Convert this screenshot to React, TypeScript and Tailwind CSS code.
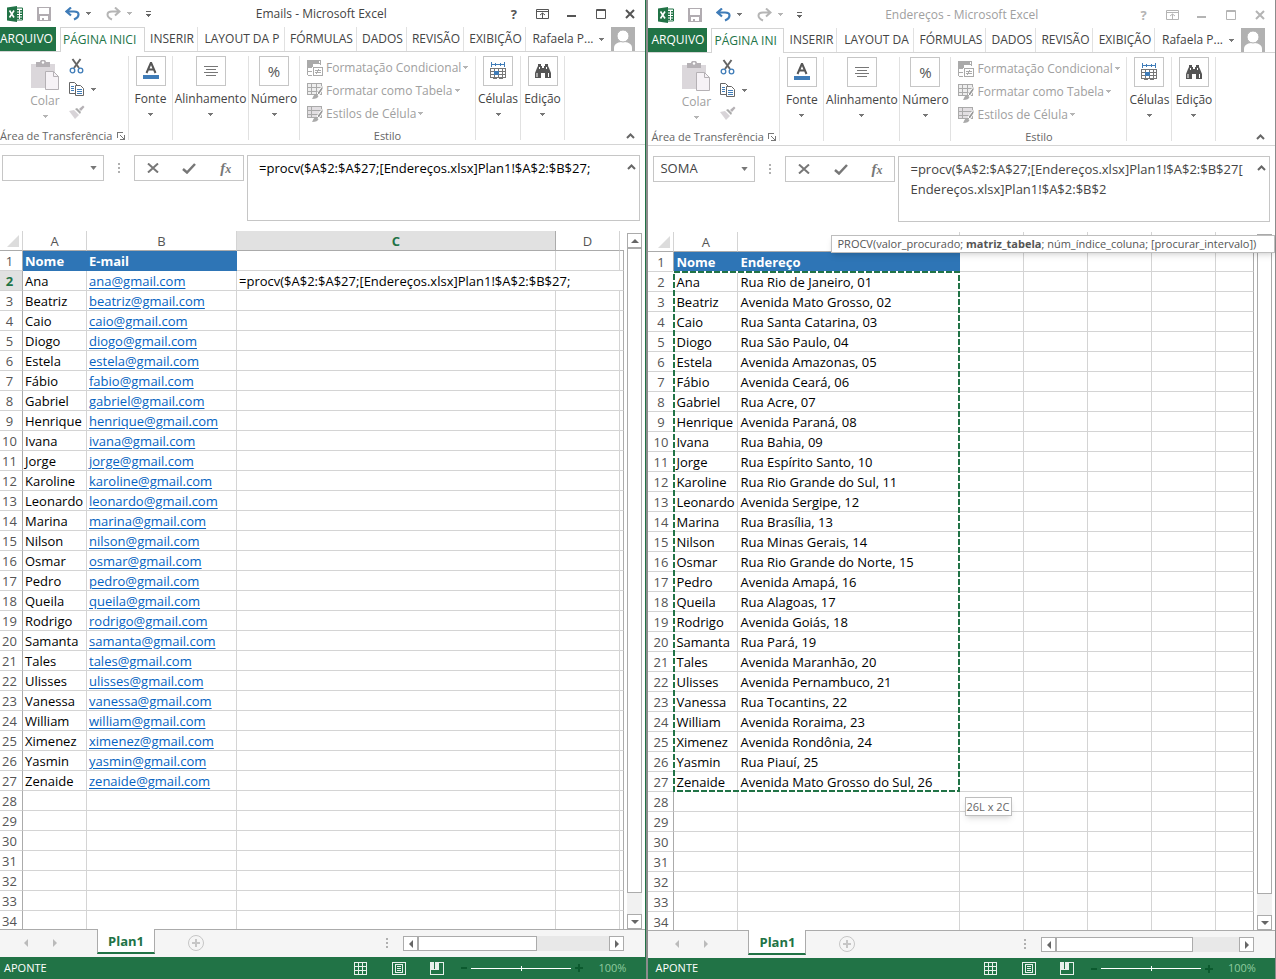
import type { ReactNode } from "react";

const names = [
  "Ana", "Beatriz", "Caio", "Diogo", "Estela", "Fábio", "Gabriel", "Henrique", "Ivana",
  "Jorge", "Karoline", "Leonardo", "Marina", "Nilson", "Osmar", "Pedro", "Queila", "Rodrigo",
  "Samanta", "Tales", "Ulisses", "Vanessa", "William", "Ximenez", "Yasmin", "Zenaide",
];

const emails = names.map((n) => n.toLowerCase().replace("á", "a") + "@gmail.com");

const addresses = [
  "Rua Rio de Janeiro, 01", "Avenida Mato Grosso, 02", "Rua Santa Catarina, 03",
  "Rua São Paulo, 04", "Avenida Amazonas, 05", "Avenida Ceará, 06", "Rua Acre, 07",
  "Avenida Paraná, 08", "Rua Bahia, 09", "Rua Espírito Santo, 10", "Rua Rio Grande do Sul, 11",
  "Avenida Sergipe, 12", "Rua Brasília, 13", "Rua Minas Gerais, 14",
  "Rua Rio Grande do Norte, 15", "Avenida Amapá, 16", "Rua Alagoas, 17", "Avenida Goiás, 18",
  "Rua Pará, 19", "Avenida Maranhão, 20", "Avenida Pernambuco, 21", "Rua Tocantins, 22",
  "Avenida Roraima, 23", "Avenida Rondônia, 24", "Rua Piauí, 25",
  "Avenida Mato Grosso do Sul, 26",
];

const rows = Array.from({ length: 34 }, (_, i) => i + 1);

const FORMULA = "=procv($A$2:$A$27;[Endereços.xlsx]Plan1!$A$2:$B$27;";

function Caret({ className = "text-[#777]" }: { className?: string }) {
  return (
    <svg width="5" height="3" viewBox="0 0 5 3" className={`shrink-0 ${className}`} shapeRendering="crispEdges">
      <path d="M0 0h5v1H4v1H3v1H2V2H1V1H0z" fill="currentColor" />
    </svg>
  );
}

function Chevron() {
  return (
    <svg width="9" height="6" viewBox="0 0 9 6" fill="none" stroke="#666" strokeWidth="2">
      <path d="M1 5l3.5-3.5L8 5" />
    </svg>
  );
}

function Dots() {
  return (
    <svg width="2" height="11" viewBox="0 0 2 11" fill="#b0b0b0" shapeRendering="crispEdges">
      <path d="M0 0h2v2H0zM0 4h2v2H0zM0 8h2v2H0z" />
    </svg>
  );
}

function TitleBar({ title, active }: { title: string; active: boolean }) {
  const tone = active ? "text-[#555]" : "text-[#b4b4b4]";
  return (
    <header className="flex h-[27px] items-center">
      <div className="flex w-[160px] shrink-0 items-center pl-[10px]">
        <svg width="16" height="16" viewBox="0 0 16 16">
          <path d="M9 2h6.5v12H9z" fill="#fff" stroke="#217346" />
          <path d="M10 4h2v1.500h-2zM13 4h2v1.500h-2zM10 6.500h2V8h-2zM13 6.500h2V8h-2zM10 9h2v1.500h-2zM13 9h2v1.500h-2zM10 11.500h2V13h-2zM13 11.500h2V13h-2z" fill="#217346" />
          <path d="M0 1.500L10 0v16L0 14.500z" fill="#217346" />
          <path d="M2.500 4.500l4.500 7M7 4.500l-4.500 7" stroke="#fff" strokeWidth="1.600" />
        </svg>
        <button aria-label="Salvar" className="ml-[14px]">
          <svg width="14" height="14" viewBox="0 0 14 14" fill="#b1acb1">
            <path d="M0 0h14v14H0zM2 1v6h10V1zM3 9v4h2v-2h2v2h4V9z" fillRule="evenodd" />
          </svg>
        </button>
        <button aria-label="Desfazer" className="ml-[14px] flex items-center gap-[6px]">
          <svg width="15" height="14" viewBox="0 0 15 14" fill="none" stroke="#3f7cb8" strokeWidth="2.200">
            <path d="M6 0.500L1.500 4.500 6 8.500M2 4.500h7c6 0 6 5.500 0 8" />
          </svg>
          <Caret />
        </button>
        <button aria-label="Refazer" className="ml-[15px] flex items-center gap-[6px]">
          <svg width="15" height="14" viewBox="0 0 15 14" fill="none" stroke="#b5b5b5" strokeWidth="2">
            <path d="M9 0.500l4.500 4L9 8.500M13 4.500H6c-6 0-6 5.500 0 8" />
          </svg>
          <Caret className="text-[#b5b5b5]" />
        </button>
        <button aria-label="Personalizar" className="ml-[14px]">
          <svg width="5" height="6" viewBox="0 0 5 6" fill="#666" shapeRendering="crispEdges">
            <path d="M0 0h5v1H0zM0 3h5v1H4v1H3v1H2V5H1V4H0z" />
          </svg>
        </button>
      </div>
      <h1 className={`min-w-0 flex-1 truncate text-center text-[12px] ${active ? "text-[#444]" : "text-[#a0a0a0]"}`}>
        {title} - Microsoft Excel
      </h1>
      <div className={`flex w-[160px] shrink-0 justify-end pr-px ${tone}`}>
        <button aria-label="Ajuda" className="w-[29px] text-center text-[13px] font-bold leading-[16px]">?</button>
        <button aria-label="Opções da faixa" className="flex w-[29px] items-center justify-center">
          <svg width="13" height="10" viewBox="0 0 13 10" fill="none" stroke="currentColor">
            <path d="M.5.5h12v9H.5zM1 2.500h11M6.500 9V4M4 6l2.500-2L9 6" />
          </svg>
        </button>
        <button aria-label="Minimizar" className="flex w-[29px] items-center justify-center">
          <svg width="9" height="10" viewBox="0 0 9 10"><path d="M0 6h9v2H0z" fill="currentColor" /></svg>
        </button>
        <button aria-label="Maximizar" className="flex w-[29px] items-center justify-center">
          <svg width="10" height="10" viewBox="0 0 10 10" fill="none" stroke="currentColor">
            <path d="M.5.5h9v9h-9zM0 1.500h10" />
          </svg>
        </button>
        <button aria-label="Fechar" className="flex w-[29px] items-center justify-center">
          <svg width="10" height="10" viewBox="0 0 10 10" stroke="currentColor" strokeWidth="2">
            <path d="M1 1l8 8M9 1L1 9" />
          </svg>
        </button>
      </div>
    </header>
  );
}

function Tabs({ home, homeWidth, layout, layoutWidth }: { home: string; homeWidth: string; layout: string; layoutWidth: string }) {
  const tabs = [
    ["INSERIR", "w-[53px]"],
    [layout, layoutWidth],
    ["FÓRMULAS", "w-[72px]"],
    ["DADOS", "w-[50px]"],
    ["REVISÃO", "w-[57px]"],
    ["EXIBIÇÃO", "w-[62px]"],
  ];
  return (
    <nav className="flex h-[25px] border-b border-[#d4d4d4] text-[12px] text-[#444]">
      <button className="w-[59px] shrink-0 bg-[#217346] text-white">ARQUIVO</button>
      <button className={`-mb-px ml-[4px] shrink-0 overflow-hidden whitespace-nowrap border border-b-0 border-[#d4d4d4] bg-white pl-[2px] text-left text-[#217346] ${homeWidth}`}>
        {home}
      </button>
      {tabs.map(([label, width]) => (
        <button key={label} className={`shrink-0 whitespace-nowrap border-r border-[#e1e1e1] pl-[2px] ${width}`}>
          {label}
        </button>
      ))}
      <button className="ml-auto mr-[10px] flex items-center">
        <span>Rafaela P...</span>
        <Caret className="ml-[6px] mr-[7px] text-[#777]" />
        <svg width="24" height="24" viewBox="0 0 24 24">
          <path d="M0 0h24v24H0z" fill="#b1b1b1" />
          <path d="M3 24v-3c0-5 5-6 9-6s9 1 9 6v3z" fill="#fff" />
          <circle cx="12" cy="9" r="6" fill="#fff" stroke="#b1b1b1" />
        </svg>
      </button>
    </nav>
  );
}

function BigButton({ label, width, children }: { label: string; width: string; children: ReactNode }) {
  return (
    <button className={`flex h-[84px] shrink-0 flex-col items-center border-r border-[#e1e1e1] ${width}`}>
      <span className="flex size-[30px] items-center justify-center border border-[#c6c6c6]">{children}</span>
      <span className="mt-[4px] text-[12px] leading-[18px] text-[#444]">{label}</span>
      <Caret className="mt-[5px] text-[#777]" />
    </button>
  );
}

function StyleIcon({ kind }: { kind: number }) {
  return (
    <svg width="16" height="16" viewBox="0 0 16 16" fill="none" stroke="#aaa" shapeRendering="crispEdges">
      {kind === 0 ? (
        <>
          <path d="M0 0h12v3H0zM0 4h5v3H0z" fill="#aaa" stroke="none" />
          <path d="M.5.5h13v4M.5 3.500h13M5.500 0v7M.5 0v15M.5 7.500H5M.5 11.500H5M.5 15.500H5" />
          <path d="M6.500 7.500h9v8h-9zM8 10.500h6M8 12.500h6M12 9l-2.500 5" fill="#fff" />
        </>
      ) : (
        <>
          <path d="M.5.5h14v11H.5z" fill={kind === 1 ? "#eee" : "#e2dfe2"} />
          <path d="M0 4.500h15M0 8.500h15M4.500 0v12" />
          {kind === 1 && <path d="M9.500 0v12" />}
          <path d="M16 2l-6 8 2 2 4-6z" fill="#999" stroke="#fff" shapeRendering="auto" />
          <path d="M5 16c1-1 1-4 4-5l2.500 2C11 15 9 16 5 16z" fill="#aaa" stroke="none" shapeRendering="auto" />
        </>
      )}
    </svg>
  );
}

function Ribbon() {
  return (
    <div className="flex h-[93px] items-start border-b border-[#d4d4d4] pt-[4px]">
      <div className="flex h-[84px] w-[132px] shrink-0 flex-col border-r border-[#e1e1e1]">
        <div className="flex h-[71px] shrink-0">
          <button className="ml-[30px] flex w-[36px] flex-col items-center pt-[4px] text-[12px] leading-[18px] text-[#a0a0a0]">
            <svg width="29" height="31" viewBox="0 0 29 31" className="shrink-0">
              <path d="M0 4h24v8h-8v16H0z" fill="#dbd7db" />
              <path d="M5 2h4c0-3 6-3 6 0h4v5H5z" fill="#b5b1b5" />
              <circle cx="12" cy="2.500" r="1.200" fill="#fff" />
              <path d="M14.500 11.500h8l5 5v13h-13z" fill="#f6f2f6" stroke="#b5b1b5" />
              <path d="M22.500 11.500v5h5" fill="none" stroke="#b5b1b5" />
            </svg>
            <span className="mt-px">Colar</span>
            <Caret className="mt-[5px] text-[#b5b5b5]" />
          </button>
          <div className="ml-[6px] flex flex-col items-start gap-[8px] pt-[2px]">
            <button aria-label="Recortar">
              <svg width="16" height="16" viewBox="0 0 16 16" fill="none">
                <path d="M3.500 1L10 10M11.500 1L5 10" stroke="#666" strokeWidth="2" />
                <circle cx="3.500" cy="12.500" r="2.300" stroke="#3f7cb8" strokeWidth="1.300" />
                <circle cx="11.500" cy="12.500" r="2.300" stroke="#3f7cb8" strokeWidth="1.300" />
              </svg>
            </button>
            <button aria-label="Copiar" className="flex items-center gap-[7px]">
              <svg width="15" height="15" viewBox="0 0 15 15" fill="#fff" stroke="#666">
                <path d="M.5.5h5l3 3v8h-8z" />
                <path d="M2 4.500h3M2 6.500h3M2 8.500h3" stroke="#3f7cb8" />
                <path d="M6.500 3.500h5l3 3v7h-8z" />
                <path d="M8 7.500h5M8 9.500h5M8 11.500h5" stroke="#3f7cb8" />
              </svg>
              <Caret />
            </button>
            <button aria-label="Pincel de formatação">
              <svg width="16" height="15" viewBox="0 0 16 15">
                <path d="M0 6l5-1 5 5-4 4z" fill="#d8d4d8" />
                <path d="M6 4l2-1 4 4-1 2z" fill="#aaa" />
                <path d="M10 4l4-3.500 1.500 1.500L12 6z" fill="#b5b1b5" />
              </svg>
            </button>
          </div>
        </div>
        <div className="flex items-center pl-[3px] text-[11px] leading-[18px] text-[#666]">
          <span className="whitespace-nowrap">Área de Transferência</span>
          <button aria-label="Abrir área de transferência" className="ml-auto mr-[3px]">
            <svg width="8" height="8" viewBox="0 0 8 8" fill="none" stroke="#777" shapeRendering="crispEdges">
              <path d="M.5 6V.5H6M3 3l4 4M7.500 3v4.500H3" />
            </svg>
          </button>
        </div>
      </div>
      <BigButton label="Fonte" width="w-[44px]">
        <svg width="16" height="18" viewBox="0 0 16 18">
          <path d="M0 13h16v4H0z" fill="#3f7cb8" />
          <path d="M3.500 11L8 0.500 12.500 11M5 7.500h6" stroke="#555" strokeWidth="2" fill="none" />
        </svg>
      </BigButton>
      <BigButton label="Alinhamento" width="w-[76px]">
        <svg width="14" height="13" viewBox="0 0 14 13" fill="#777" shapeRendering="crispEdges">
          <path d="M0 1h14v1H0zM2 4h10v1H2zM0 7h14v1H0zM2 10h10v1H2z" />
        </svg>
      </BigButton>
      <BigButton label="Número" width="w-[51px]">
        <span className="text-[15px] text-[#555]">%</span>
      </BigButton>
      <div className="flex h-[84px] w-[176px] shrink-0 flex-col border-r border-[#e1e1e1]">
        <div className="flex h-[71px] shrink-0 flex-col pl-[7px]">
          {["Formatação Condicional", "Formatar como Tabela", "Estilos de Célula"].map((label, i) => (
            <button key={label} className="flex h-[23px] items-center whitespace-nowrap text-[12px] text-[#a0a0a0]">
              <StyleIcon kind={i} />
              <span className="ml-[3px] mr-[2px]">{label}</span>
              <Caret className="text-[#b5b5b5]" />
            </button>
          ))}
        </div>
        <p className="text-center text-[11px] leading-[18px] text-[#666]">Estilo</p>
      </div>
      <BigButton label="Células" width="w-[45px]">
        <svg width="16" height="18" viewBox="0 0 16 18" fill="none" shapeRendering="crispEdges">
          <path d="M1 2.500h14M1.500 0v5M14.500 0v5M5.500 1v3M10.500 1v3" stroke="#3f7cb8" />
          <path d="M.5 6.500h15v9H.5zM0 9.500h16M0 12.500h16M4.500 6v10M8.500 6v10M12.500 6v10M3 16.500h4M9 16.500h4" stroke="#777" />
          <path d="M4 9h5v4H4z" fill="#3f7cb8" />
        </svg>
      </BigButton>
      <BigButton label="Edição" width="w-[44px]">
        <svg width="16" height="14" viewBox="0 0 16 14" fill="#555">
          <path d="M3 0h3v2h1v2h2V2h1V0h3v2l1 2 2 5v5h-6V9H6v5H0V9l2-5 1-2z" />
          <path d="M1.500 9h1v4h-1zM14 9h-1v4h1zM4 3h1v2H4zM11 3h1v2h-1z" fill="#fff" />
        </svg>
      </BigButton>
      <button aria-label="Recolher faixa" className="ml-auto mr-[10px] self-end pb-[5px]">
        <Chevron />
      </button>
    </div>
  );
}

function FormulaBar({ id, name, value, color }: { id: string; name: string; value: string; color: string }) {
  return (
    <div className="flex h-[86px] items-start pl-[5px] pr-[5px] pt-[10px] text-[13px]">
      <div className="flex h-[26px] w-[102px] shrink-0 items-center border border-[#c6c6c6] pr-[6px]">
        <input id={`${id}-name`} aria-label="Caixa de nome" defaultValue={name} className="w-full min-w-0 pl-[6px] text-[#444] outline-none" />
        <button aria-label="Lista de nomes">
          <svg width="7" height="4" viewBox="0 0 8 5"><path d="M0 0h8L4 5z" fill="#777" /></svg>
        </button>
      </div>
      <span className="flex h-[26px] w-[30px] shrink-0 items-center justify-center"><Dots /></span>
      <div className="flex h-[26px] w-[110px] shrink-0 items-center justify-around border border-[#c6c6c6]">
        <button aria-label="Cancelar">
          <svg width="12" height="10" viewBox="0 0 12 10" stroke="#777" strokeWidth="2"><path d="M1 .5l10 9M11 .5l-10 9" /></svg>
        </button>
        <button aria-label="Inserir">
          <svg width="14" height="11" viewBox="0 0 14 11" fill="none" stroke="#777" strokeWidth="2.500"><path d="M1 6l4 3.500L13 1" /></svg>
        </button>
        <button aria-label="Inserir função" className="font-['Liberation_Serif',serif] text-[15px] font-bold italic leading-[20px] text-[#777]">
          f<span className="text-[12px]">x</span>
        </button>
      </div>
      <div className="ml-[3px] flex h-[66px] min-w-0 flex-1 items-start border border-[#c6c6c6] pr-[3px]">
        <textarea
          aria-label="Barra de fórmulas"
          defaultValue={value}
          className={`h-full min-w-0 flex-1 resize-none overflow-hidden break-all pl-[11px] pt-[2px] leading-[20px] outline-none ${color}`}
        />
        <button aria-label="Recolher barra de fórmulas" className="pt-[8px]"><Chevron /></button>
      </div>
    </div>
  );
}

function ScrollButton({ label, d }: { label: string; d: string }) {
  return (
    <button aria-label={label} className="flex size-[15px] shrink-0 items-center justify-center border border-[#ababab] bg-white">
      <svg width="8" height="8" viewBox="0 0 8 8"><path d={d} fill="#666" /></svg>
    </button>
  );
}

function VerticalScroll() {
  return (
    <div className="flex w-[21px] shrink-0 flex-col px-[3px] pt-[2px]">
      <ScrollButton label="Rolar para cima" d="M0 6l4-4 4 4z" />
      <div className="flex min-h-0 flex-1 flex-col bg-[#f1f1f1]">
        <div className="mb-[21px] flex-1 border border-[#ababab] bg-white" />
      </div>
      <ScrollButton label="Rolar para baixo" d="M0 2h8L4 6z" />
    </div>
  );
}

function ColumnHeaders({ columns, selected }: { columns: string[]; selected?: string }) {
  return (
    <thead>
      <tr className="h-[20px]">
        <th className="border-b border-r border-b-[#ababab] border-r-[#d4d4d4]">
          <svg width="12" height="12" viewBox="0 0 12 12" className="ml-auto mr-[3px]"><path d="M12 0v12H0z" fill="#dcdcdc" /></svg>
        </th>
        {columns.map((c, i) => (
          <th
            key={i}
            className={
              c !== "" && c === selected
                ? "border-b border-r border-[#ababab] bg-[#e1e1e1] font-bold text-[#217346]"
                : "border-b border-r border-b-[#ababab] border-r-[#d4d4d4] font-normal text-[#555]"
            }
          >
            {c}
          </th>
        ))}
        <th className="border-b border-[#ababab]" />
      </tr>
    </thead>
  );
}

const sheet = "w-full table-fixed border-separate border-spacing-0 text-[13px] leading-[18px] text-black";
const cell = "overflow-hidden whitespace-nowrap border-b border-r border-[#d4d4d4] pl-[2px]";
const headCell = "bg-[#2e75b6] pl-[2px] text-left font-bold text-white";
const edge = "border-b border-r border-b-[#d4d4d4] border-r-[#ababab]";

function RowNumber({ n, selected }: { n: number; selected?: boolean }) {
  return (
    <th scope="row" className={`${edge} ${selected ? "bg-[#e1e1e1] font-bold text-[#217346]" : "font-normal text-[#555]"}`}>
      {n}
    </th>
  );
}

function EmailSheet() {
  return (
    <table className={sheet}>
      <colgroup>
        <col className="w-[26px]" />
        <col className="w-[64px]" />
        <col className="w-[150px]" />
        <col className="w-[319px]" />
        <col className="w-[64px]" />
        <col />
      </colgroup>
      <ColumnHeaders columns={["A", "B", "C", "D"]} selected="C" />
      <tbody>
        {rows.map((n) => (
          <tr key={n} className="h-[20px]">
            <RowNumber n={n} selected={n === 2} />
            {n === 1 ? (
              <>
                <th className={headCell}>Nome</th>
                <th className={headCell}>E-mail</th>
              </>
            ) : (
              <>
                <td className={cell}>{names[n - 2]}</td>
                <td className={cell}>
                  {emails[n - 2] && (
                    <a href={`mailto:${emails[n - 2]}`} className="text-[#0563c1] underline underline-offset-2">
                      {emails[n - 2]}
                    </a>
                  )}
                </td>
              </>
            )}
            {n === 2 ? (
              <td colSpan={3} className={`whitespace-nowrap pl-[2px] ${edge}`}>{FORMULA}</td>
            ) : (
              <>
                <td className={cell} />
                <td className={cell} />
                <td className={edge} />
              </>
            )}
          </tr>
        ))}
      </tbody>
    </table>
  );
}

function AddressSheet() {
  return (
    <table className={sheet}>
      <colgroup>
        <col className="w-[26px]" />
        <col className="w-[64px]" />
        <col className="w-[222px]" />
        <col className="w-[64px]" />
        <col className="w-[64px]" />
        <col className="w-[64px]" />
        <col className="w-[64px]" />
        <col />
      </colgroup>
      <ColumnHeaders columns={["A", "", "", "", "", ""]} />
      <tbody>
        {rows.map((n) => (
          <tr key={n} className="h-[20px]">
            <RowNumber n={n} />
            {n === 1 ? (
              <>
                <th className={headCell}>Nome</th>
                <th className={headCell}>Endereço</th>
              </>
            ) : (
              <>
                <td className={cell}>{names[n - 2]}</td>
                <td className={cell}>{addresses[n - 2]}</td>
              </>
            )}
            <td className={cell} />
            <td className={cell} />
            <td className={cell} />
            <td className={cell} />
            <td className={edge} />
          </tr>
        ))}
      </tbody>
    </table>
  );
}

function SheetBar({ scroll, thumb }: { scroll: string; thumb: string }) {
  return (
    <div className="flex h-[28px] shrink-0 items-start border-t border-[#ababab] bg-[#f5f5f5]">
      <div className="flex h-[26px] w-[100px] shrink-0 items-center gap-[25px] pl-[27px]">
        <button aria-label="Planilha anterior"><svg width="4" height="8" viewBox="0 0 4 8"><path d="M4 0v8L0 4z" fill="#bbb" /></svg></button>
        <button aria-label="Próxima planilha"><svg width="4" height="8" viewBox="0 0 4 8"><path d="M0 0v8l4-4z" fill="#bbb" /></svg></button>
      </div>
      <button className="-mt-px h-[25px] w-[58px] shrink-0 border-x border-b-2 border-x-[#ababab] border-b-[#217346] bg-white pt-px text-[13px] font-bold leading-[22px] text-[#217346]">
        Plan1
      </button>
      <button aria-label="Nova planilha" className="ml-[33px] mt-[5px]">
        <svg width="16" height="16" viewBox="0 0 16 16" fill="none" stroke="#c6c6c6">
          <circle cx="8" cy="8" r="7.500" />
          <path d="M8 4v8M4 8h8" strokeWidth="2" />
        </svg>
      </button>
      <div className="ml-auto mr-[15px] mt-[8px]"><Dots /></div>
      <div className={`mr-[21px] mt-[6px] flex shrink-0 bg-[#e8e8e8] ${scroll}`}>
        <ScrollButton label="Rolar para a esquerda" d="M6 0v8L2 4z" />
        <div className={`h-[15px] border border-[#ababab] bg-white ${thumb}`} />
        <span className="flex-1" />
        <ScrollButton label="Rolar para a direita" d="M2 0v8l4-4z" />
      </div>
    </div>
  );
}

function StatusBar({ height }: { height: string }) {
  return (
    <footer className={`flex shrink-0 items-center bg-[#217346] pl-[7px] pr-[19px] text-[11px] text-white ${height}`}>
      <span>APONTE</span>
      <button aria-label="Normal" className="ml-auto">
        <svg width="13" height="13" viewBox="0 0 13 13" fill="none" stroke="#e9f1ec" shapeRendering="crispEdges">
          <path d="M.5.5h12v12H.5zM4.500 0v13M8.500 0v13M0 4.500h13M0 8.500h13" />
        </svg>
      </button>
      <button aria-label="Layout da página" className="ml-[25px]">
        <svg width="14" height="13" viewBox="0 0 14 13" fill="none" stroke="#e9f1ec" shapeRendering="crispEdges">
          <path d="M.5.5h13v12H.5zM3.500 2.500h7v8h-7zM5 4.500h4M5 6.500h4M5 8.500h4" />
        </svg>
      </button>
      <button aria-label="Quebra de página" className="ml-[24px]">
        <svg width="14" height="13" viewBox="0 0 14 13" shapeRendering="crispEdges">
          <path d="M0 0h4v7H0zM5 0h4v7H5z" fill="#e9f1ec" />
          <path d="M.5 0v12.500h13V.5H9M0 7.500h9" fill="none" stroke="#e9f1ec" />
        </svg>
      </button>
      <button aria-label="Reduzir" className="ml-[17px]">
        <svg width="6" height="8" viewBox="0 0 6 8"><path d="M0 3h6v2H0z" fill="#0b5a2e" /></svg>
      </button>
      <input
        type="range"
        aria-label="Zoom"
        defaultValue={50}
        className="ml-[4px] h-[5px] w-[100px] appearance-none bg-[linear-gradient(#fff,#fff)] bg-[length:100%_1px] bg-center bg-no-repeat [&::-webkit-slider-thumb]:h-[5px] [&::-webkit-slider-thumb]:w-px [&::-webkit-slider-thumb]:appearance-none [&::-webkit-slider-thumb]:bg-white"
      />
      <button aria-label="Ampliar" className="ml-[4px]">
        <svg width="8" height="8" viewBox="0 0 8 8"><path d="M0 3h3V0h2v3h3v2H5v3H3V5H0z" fill="#0b5a2e" /></svg>
      </button>
      <span className="ml-[15px] w-[28px] text-[#8fcb9f]">100%</span>
    </footer>
  );
}

export default function App() {
  return (
    <div className="flex h-screen overflow-hidden bg-white font-['Open_Sans','Noto_Sans',sans-serif]">
      <section className="-ml-[3px] flex min-w-0 flex-[651_1_0%] border-r-2 border-[#8c8c8c]">
        <div className="flex min-w-0 flex-1 flex-col border-r border-[#217346]">
          <TitleBar title="Emails" active />
          <Tabs home="PÁGINA INICI" homeWidth="w-[85px]" layout="LAYOUT DA P" layoutWidth="w-[87px]" />
          <Ribbon />
          <FormulaBar id="emails" name="" value={FORMULA} color="text-black" />
          <div className="flex min-h-0 flex-1">
            <div className="min-w-0 flex-1 overflow-hidden">
              <EmailSheet />
            </div>
            <VerticalScroll />
          </div>
          <SheetBar scroll="w-[221px]" thumb="w-[119px]" />
          <StatusBar height="h-[22px]" />
        </div>
      </section>

      <section className="flex min-w-0 flex-[628_1_0%] flex-col border-r border-[#8c8c8c] pt-px">
        <TitleBar title="Endereços" active={false} />
        <Tabs home="PÁGINA INI" homeWidth="w-[73px]" layout="LAYOUT DA" layoutWidth="w-[77px]" />
        <Ribbon />
        <FormulaBar
          id="enderecos"
          name="SOMA"
          value={"=procv($A$2:$A$27;[Endereços.xlsx]Plan1!$A$2:$B$27[\nEndereços.xlsx]Plan1!$A$2:$B$2"}
          color="text-[#444]"
        />
        <div className="relative flex min-h-0 flex-1">
          <div className="min-w-0 flex-1 overflow-hidden">
            <AddressSheet />
          </div>
          <VerticalScroll />
          <svg className="absolute left-[25px] top-[39px]" width="288" height="522" viewBox="0 0 288 522" fill="none" shapeRendering="crispEdges">
            <path d="M1 1h285v519H1z" stroke="#fff" strokeWidth="2" />
            <path d="M1 1h285v519H1z" stroke="#217346" strokeWidth="2" strokeDasharray="6 2" />
          </svg>
          <p className="absolute left-[183px] right-0 top-[3px] h-[18px] whitespace-nowrap border border-[#bebebe] bg-white pl-[5px] text-[11px] leading-[15px] text-[#555] shadow-md">
            PROCV(valor_procurado; <b>matriz_tabela</b>; núm_índice_coluna; [procurar_intervalo])
          </p>
          <p className="absolute left-[317px] top-[565px] h-[19px] w-[47px] whitespace-nowrap border border-[#bebebe] bg-white text-[11px] leading-[17px] text-[#666] shadow-md">
            26L x 2C
          </p>
        </div>
        <SheetBar scroll="w-[213px]" thumb="w-[137px]" />
        <StatusBar height="h-[21px]" />
      </section>
    </div>
  );
}
